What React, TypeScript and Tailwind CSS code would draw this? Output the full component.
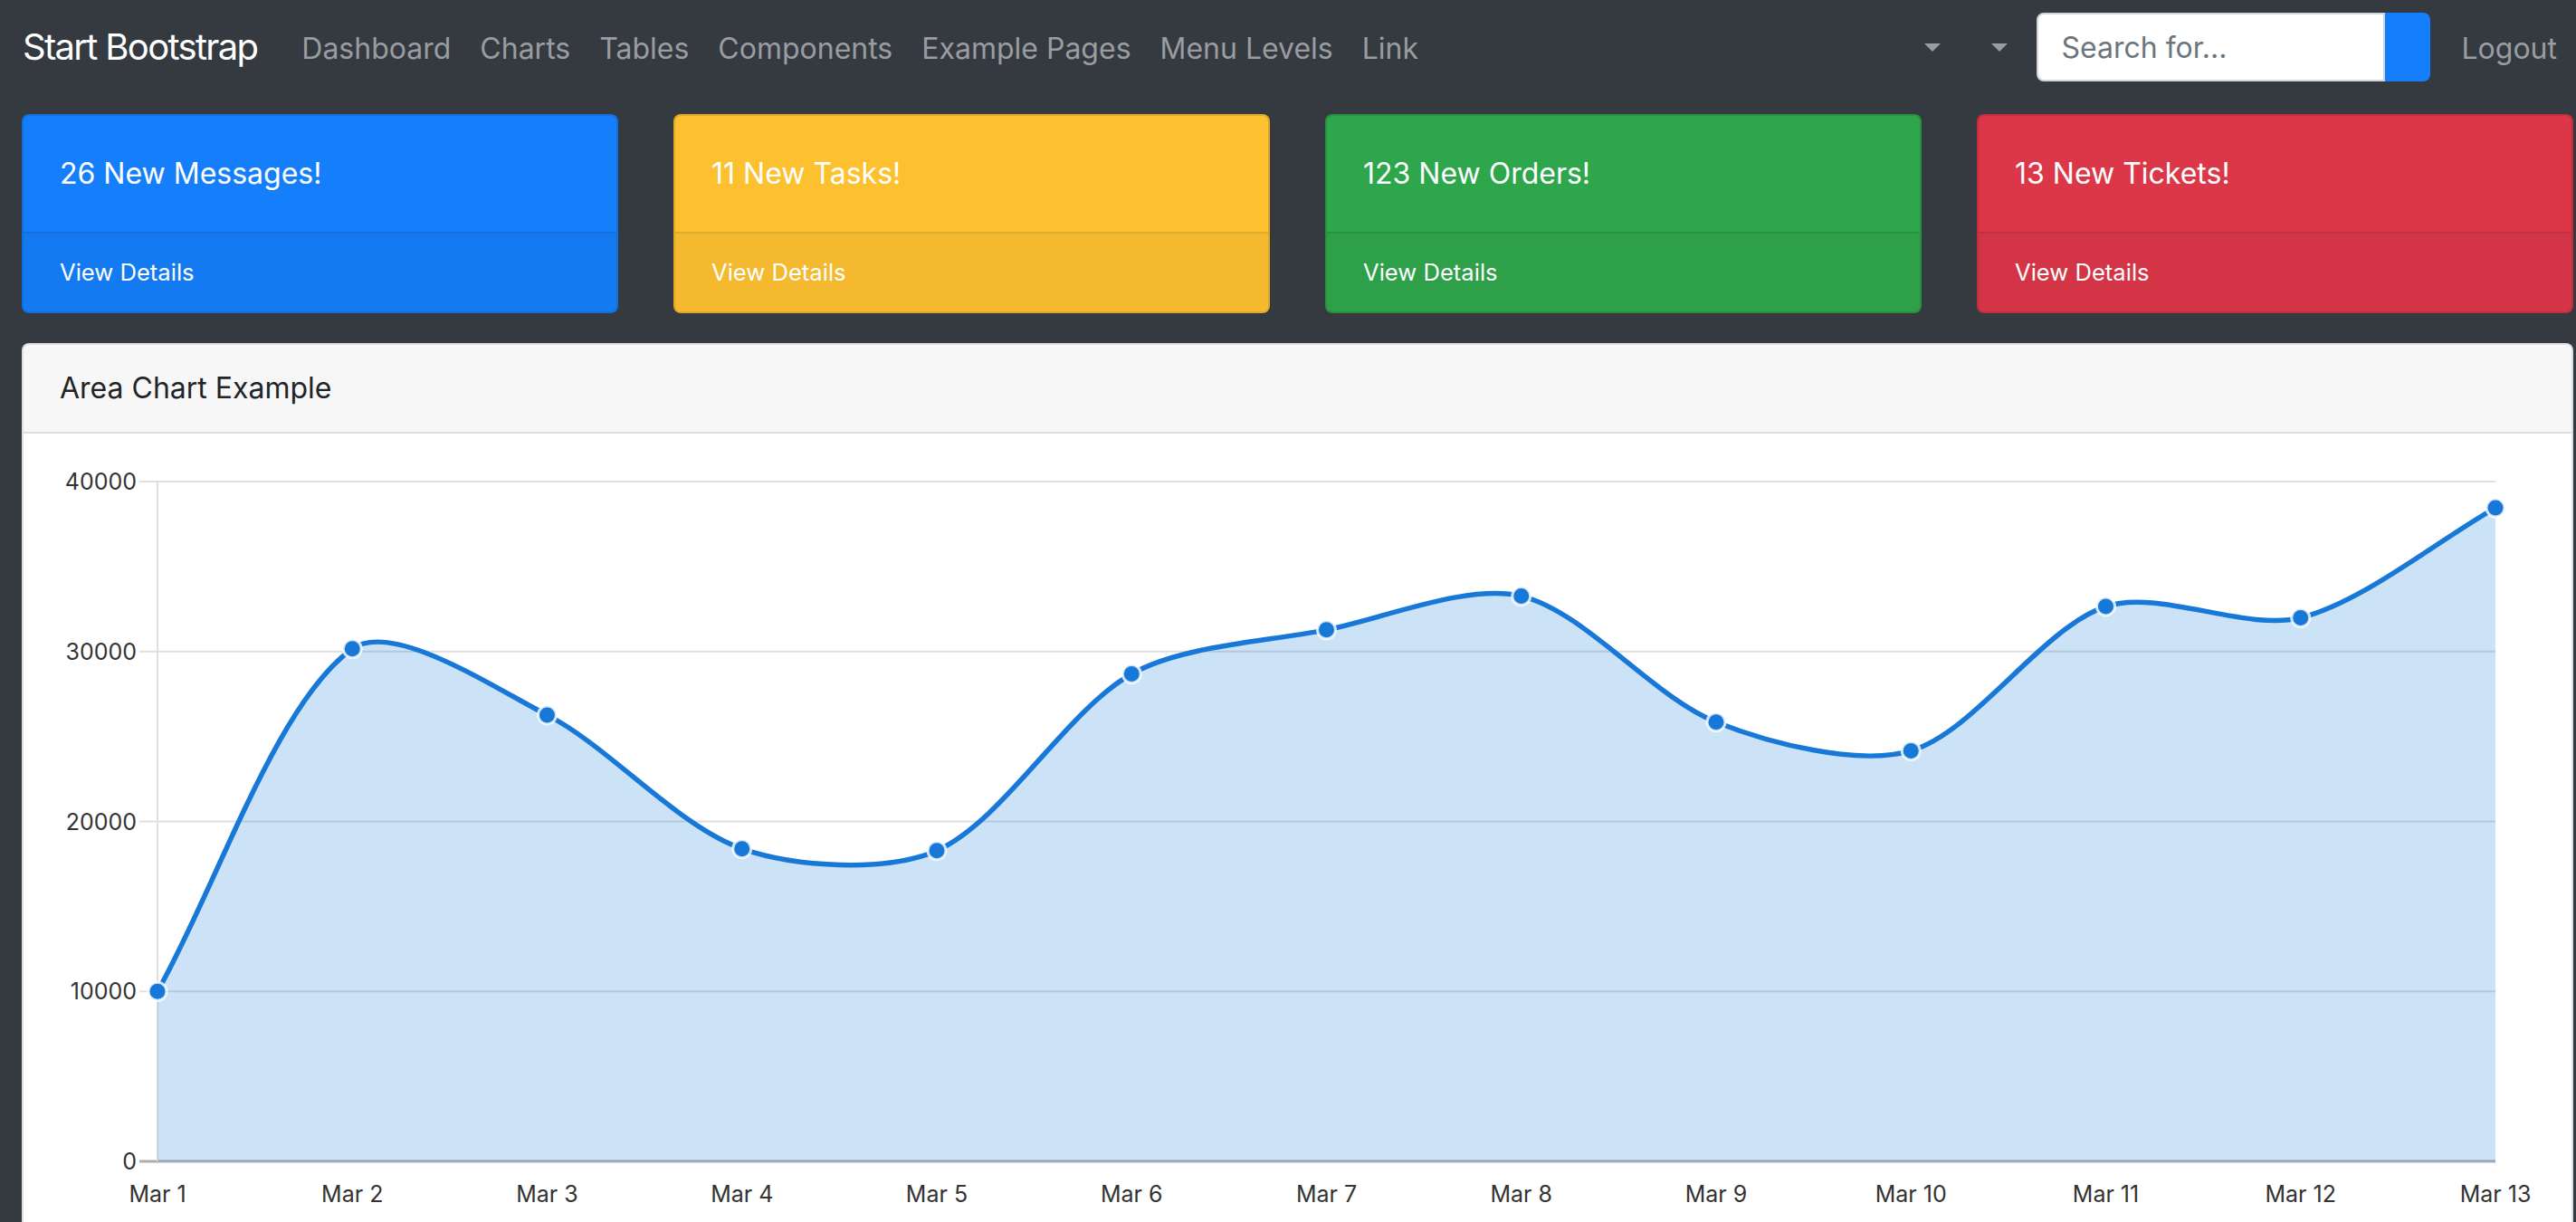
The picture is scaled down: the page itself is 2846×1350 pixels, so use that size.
import React from 'react'

const navLinks = ['Dashboard', 'Charts', 'Tables', 'Components', 'Example Pages', 'Menu Levels', 'Link']

const stats = [
    { text: '26 New Messages!', body: 'bg-[#157ffb]', foot: 'bg-[#147af2]', line: 'border-[#126fdc]' },
    { text: '11 New Tasks!', body: 'bg-[#fdc02f]', foot: 'bg-[#f4b92e]', line: 'border-[#ddab2a]' },
    { text: '123 New Orders!', body: 'bg-[#2ea64b]', foot: 'bg-[#2da049]', line: 'border-[#289142]' },
    { text: '13 New Tickets!', body: 'bg-[#db3748]', foot: 'bg-[#d43546]', line: 'border-[#c0303f]' },
]

const data = [10000, 30162, 26263, 18394, 18287, 28682, 31274, 33259, 25849, 24159, 32651, 31984, 38451]
const labels = data.map((_, i) => `Mar ${i + 1}`)

// chart area in page pixels
const area = { left: 174, right: 2757, top: 531, bottom: 1282 }
const yTicks = [0, 10000, 20000, 30000, 40000]

const yPos = (v: number) => area.bottom - (v / 40000) * (area.bottom - area.top)
const clamp = (v: number, lo: number, hi: number) => Math.min(Math.max(v, lo), hi)

function buildPaths() {
    const step = (area.right - area.left) / (data.length - 1)
    const pts = data.map((v, i) => ({ x: area.left + i * step, y: yPos(v) }))
    const tension = 0.3

    // same spline rule as chart.js line elements
    const ctrl = pts.map((p, i) => {
        const prev = pts[i - 1] ?? p
        const next = pts[i + 1] ?? p
        const d01 = Math.hypot(p.x - prev.x, p.y - prev.y)
        const d12 = Math.hypot(next.x - p.x, next.y - p.y)
        const s01 = d01 / (d01 + d12) || 0
        const s12 = d12 / (d01 + d12) || 0
        const fa = tension * s01
        const fb = tension * s12
        return {
            px: clamp(p.x - fa * (next.x - prev.x), area.left, area.right),
            py: clamp(p.y - fa * (next.y - prev.y), area.top, area.bottom),
            nx: clamp(p.x + fb * (next.x - prev.x), area.left, area.right),
            ny: clamp(p.y + fb * (next.y - prev.y), area.top, area.bottom),
        }
    })

    let line = `M ${pts[0].x} ${pts[0].y}`
    for (let i = 1; i < pts.length; i++) {
        line += ` C ${ctrl[i - 1].nx} ${ctrl[i - 1].ny} ${ctrl[i].px} ${ctrl[i].py} ${pts[i].x} ${pts[i].y}`
    }
    const fill = `${line} L ${pts[pts.length - 1].x} ${area.bottom} L ${pts[0].x} ${area.bottom} Z`
    return { pts, line, fill }
}

function AreaChart() {
    const { pts, line, fill } = buildPaths()

    return (
        <svg width={2735} height={840} viewBox="66 503 2735 840" className="block">
            {/* grid */}
            {yTicks.map((t) => (
                <g key={t}>
                    <line x1={154} x2={area.right} y1={yPos(t)} y2={yPos(t)} stroke={t === 0 ? '#aeaeae' : '#dfdfdf'} strokeWidth={t === 0 ? 3 : 2} />
                    <text x={151} y={yPos(t)} textAnchor="end" dominantBaseline="central" fontFamily="Inter, sans-serif" fontSize={25} fill="#333">
                        {t}
                    </text>
                </g>
            ))}
            <line x1={area.left} x2={area.left} y1={area.top} y2={area.bottom} stroke="#dfdfdf" strokeWidth={2} />

            <path d={fill} fill="rgba(2,117,216,0.2)" />
            <path d={line} fill="none" stroke="#1878d8" strokeWidth={5.5} />

            {pts.map((p, i) => (
                <circle key={i} cx={p.x} cy={p.y} r={10} fill="#1878d8" stroke="rgba(255,255,255,0.8)" strokeWidth={3} />
            ))}

            {labels.map((l, i) => (
                <text key={l} x={pts[i].x} y={1318} textAnchor="middle" dominantBaseline="central" fontFamily="Inter, sans-serif" fontSize={25} fill="#333">
                    {l}
                </text>
            ))}
        </svg>
    )
}

export default function App() {
    return (
        <div className="min-h-[1400px] bg-[#343a40] font-['Inter',sans-serif]">
            {/* Navbar */}
            <nav className="flex h-[108px] items-center pl-[25px] pr-[21px]">
                <a className="mb-[5px] text-[40px] leading-[60px] tracking-[-0.042em] text-white" href="#">
                    Start Bootstrap
                </a>
                <ul className="ml-[49px] flex gap-[32px]">
                    {navLinks.map((l) => (
                        <li key={l}>
                            <a className="text-[32px] leading-[48px] text-[#9a9da0]" href="#">
                                {l}
                            </a>
                        </li>
                    ))}
                </ul>

                <div className="ml-auto flex items-center">
                    <span className="mb-[3px] h-0 w-0 border-x-[9px] border-t-[9px] border-x-transparent border-t-[#9a9da0]" />
                    <span className="mb-[3px] ml-[56px] h-0 w-0 border-x-[9px] border-t-[9px] border-x-transparent border-t-[#9a9da0]" />
                    <form className="mb-[4px] ml-[32px] flex h-[76px]">
                        <input
                            className="h-full w-[385px] rounded-l-[8px] border-2 border-[#ced4da] bg-white px-[26px] text-[32px] text-[#495057] outline-none placeholder:text-[#6c757d]"
                            placeholder="Search for..."
                        />
                        <button className="h-full w-[50px] rounded-r-[8px] bg-[#157ffb]" type="button" />
                    </form>
                    <a className="ml-[35px] text-[32px] leading-[48px] text-[#9a9da0]" href="#">
                        Logout
                    </a>
                </div>
            </nav>

            <div className="pl-[24px] pr-[3px] pt-[18px]">
                {/* Stat cards */}
                <div className="grid grid-cols-4 gap-x-[61px]">
                    {stats.map((s) => (
                        <div key={s.text} className={`overflow-hidden rounded-[8px] border-2 border-[rgba(0,0,0,0.125)] text-white ${s.body}`}>
                            <div className="px-[40px] py-[40px] text-[32px] leading-[48px]">{s.text}</div>
                            <a className={`block border-t-2 px-[40px] py-[24px] text-[25.6px] leading-[38px] ${s.foot} ${s.line}`} href="#">
                                View Details
                            </a>
                        </div>
                    ))}
                </div>

                {/* Area chart card */}
                <div className="mt-[33px] overflow-hidden rounded-[8px] border-2 border-[rgba(0,0,0,0.125)] bg-white">
                    <div className="border-b-2 border-[#dfdfdf] bg-[#f7f7f7] px-[40px] py-[24px] text-[32px] leading-[48px] text-[#212529]">
                        Area Chart Example
                    </div>
                    <div className="px-[40px] pb-[40px] pt-[25px]">
                        <AreaChart />
                    </div>
                </div>
            </div>
        </div>
    )
}
